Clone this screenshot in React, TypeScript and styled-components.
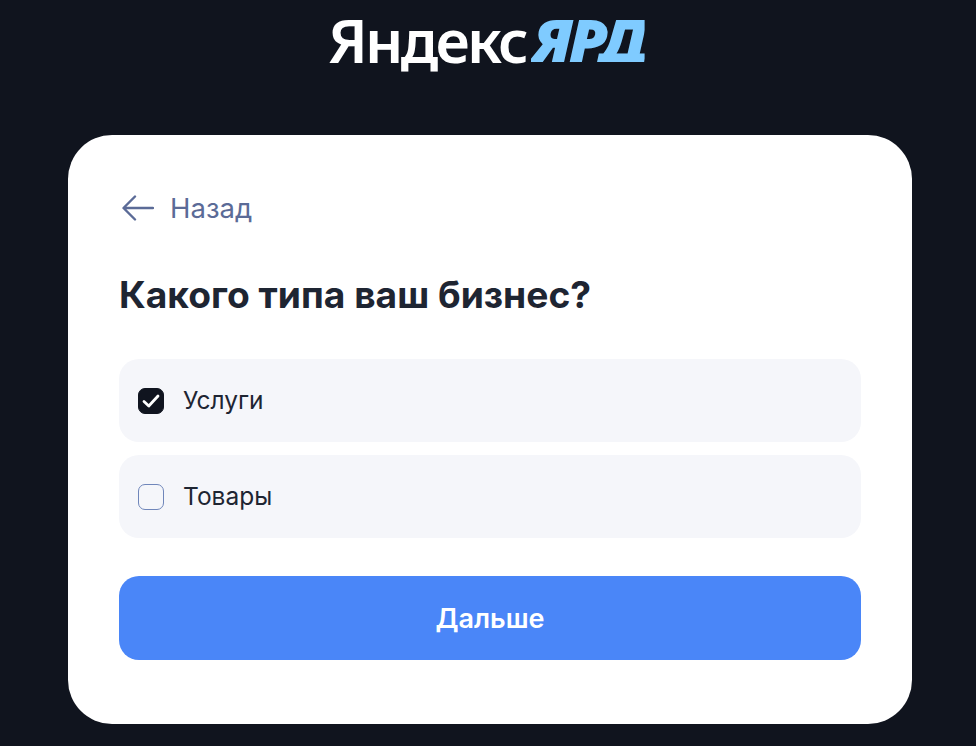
import React, { useState } from "react";
import styled, { createGlobalStyle } from "styled-components";

const GlobalStyle = createGlobalStyle`
  html, body {
    margin: 0;
    padding: 0;
    background: #10141e;
    font-family: "Inter", "Noto Sans", sans-serif;
  }
`;

const Page = styled.div`
  width: 976px;
  height: 746px;
  overflow: hidden;
  box-sizing: border-box;
  padding-top: 7px;
  display: flex;
  flex-direction: column;
  align-items: center;
`;

const Logo = styled.div`
  height: 66px;
  margin: 0 10px 62px 0;
  display: flex;
  align-items: center;
  gap: 5px;
  font-family: "Noto Sans", sans-serif;
  line-height: 66px;
`;

const LogoWord = styled.span`
  color: #ffffff;
  font-size: 60px;
  font-weight: 600;
  letter-spacing: -2.8px;
`;

const LogoMark = styled.span`
  color: #7fcbff;
  font-size: 60px;
  font-weight: 900;
  font-style: italic;
  letter-spacing: -3px;
  transform: scaleX(1.06);
  transform-origin: left center;
  clip-path: inset(0 0 11px 0);
`;

const Card = styled.div`
  width: 844px;
  height: 589px;
  margin-left: 4px;
  box-sizing: border-box;
  padding: 51px 51px 0;
  background: #ffffff;
  border-radius: 44px;
`;

const BackLink = styled.a`
  display: flex;
  align-items: center;
  gap: 16px;
  height: 44px;
  margin-left: 3px;
  color: #5b6b97;
  font-size: 27.5px;
  cursor: pointer;
`;

const Title = styled.h1`
  margin: 42px 0 41px;
  color: #1e2532;
  font-size: 37.2px;
  line-height: 46px;
  font-weight: 700;
`;

const Options = styled.div`
  display: flex;
  flex-direction: column;
  gap: 13px;
`;

const Option = styled.label`
  display: flex;
  align-items: center;
  gap: 19px;
  height: 83px;
  padding-left: 19px;
  background: #f5f6fa;
  border-radius: 20px;
  color: #1e2532;
  font-size: 24.5px;
  line-height: 30px;
  cursor: pointer;
`;

const OptionLabel = styled.span`
  margin-top: -2px;
`;

const Box = styled.span<{ $checked: boolean }>`
  width: 26px;
  height: 26px;
  box-sizing: border-box;
  display: flex;
  align-items: center;
  justify-content: center;
  border-radius: 7px;
  background: ${({ $checked }) => ($checked ? "#10141f" : "transparent")};
  border: 1px solid ${({ $checked }) => ($checked ? "#10141f" : "#6f86ba")};
`;

const HiddenInput = styled.input`
  display: none;
`;

const NextButton = styled.button`
  display: block;
  width: 100%;
  height: 84px;
  margin-top: 38px;
  border: 0;
  border-radius: 20px;
  background: #4a86f8;
  color: #ffffff;
  font-family: inherit;
  font-size: 27px;
  font-weight: 600;
  cursor: pointer;
`;

const OPTIONS = ["Услуги", "Товары"];

export default function App() {
  const [selected, setSelected] = useState<Record<string, boolean>>({ Услуги: true });

  return (
    <Page>
      <GlobalStyle />
      <Logo>
        <LogoWord>Яндекс</LogoWord>
        <LogoMark>ЯРД</LogoMark>
      </Logo>
      <Card>
        <BackLink>
          <svg width="32" height="26" viewBox="0 0 32 26" fill="none">
            <path d="M31 13H2M13 1.5L1.5 13L13 24.5" stroke="#5b6b97" strokeWidth="2.4" strokeLinecap="round" strokeLinejoin="round" />
          </svg>
          Назад
        </BackLink>
        <Title>Какого типа ваш бизнес?</Title>
        <Options>
          {OPTIONS.map((name) => (
            <Option key={name}>
              <HiddenInput
                type="checkbox"
                checked={!!selected[name]}
                onChange={() => setSelected({ ...selected, [name]: !selected[name] })}
              />
              <Box $checked={!!selected[name]}>
                {selected[name] && (
                  <svg width="18" height="14" viewBox="0 0 18 14" fill="none">
                    <path d="M2 7.5L6.8 12L16 2" stroke="#ffffff" strokeWidth="2.8" strokeLinecap="round" strokeLinejoin="round" />
                  </svg>
                )}
              </Box>
              <OptionLabel>{name}</OptionLabel>
            </Option>
          ))}
        </Options>
        <NextButton>Дальше</NextButton>
      </Card>
    </Page>
  );
}
